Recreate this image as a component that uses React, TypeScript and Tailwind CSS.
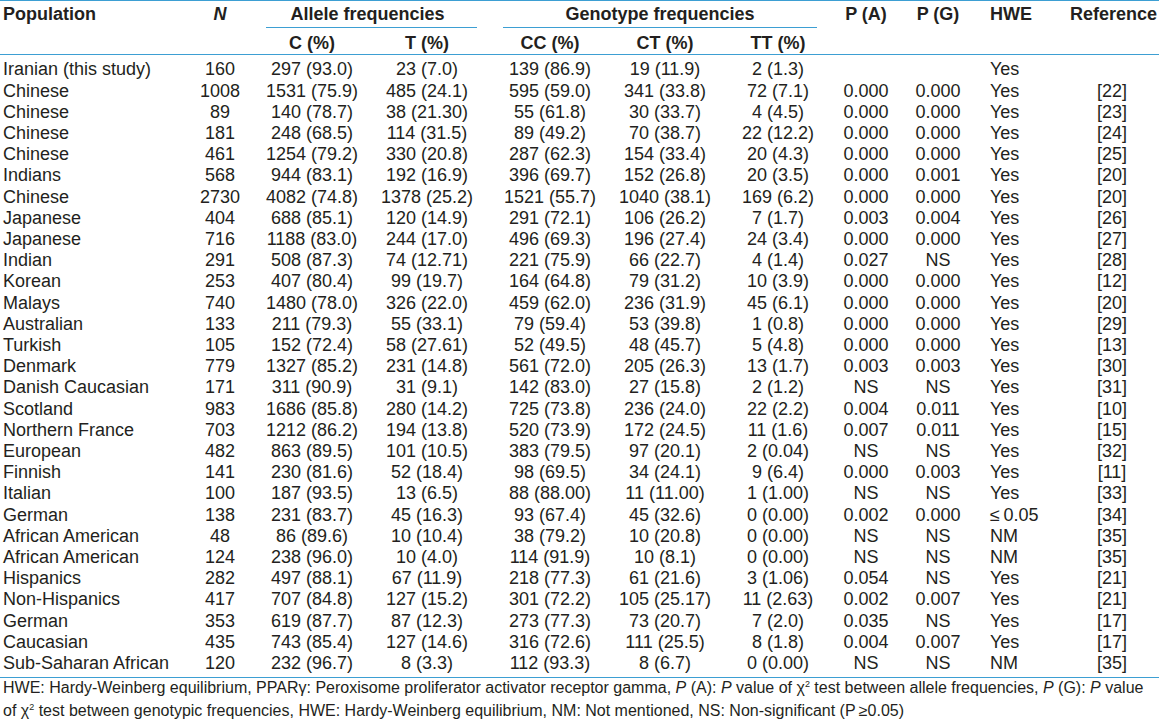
import React from "react";

const rows: string[][] = [
  ["Iranian (this study)", "160", "297 (93.0)", "23 (7.0)", "139 (86.9)", "19 (11.9)", "2 (1.3)", "", "", "Yes", ""],
  ["Chinese", "1008", "1531 (75.9)", "485 (24.1)", "595 (59.0)", "341 (33.8)", "72 (7.1)", "0.000", "0.000", "Yes", "[22]"],
  ["Chinese", "89", "140 (78.7)", "38 (21.30)", "55 (61.8)", "30 (33.7)", "4 (4.5)", "0.000", "0.000", "Yes", "[23]"],
  ["Chinese", "181", "248 (68.5)", "114 (31.5)", "89 (49.2)", "70 (38.7)", "22 (12.2)", "0.000", "0.000", "Yes", "[24]"],
  ["Chinese", "461", "1254 (79.2)", "330 (20.8)", "287 (62.3)", "154 (33.4)", "20 (4.3)", "0.000", "0.000", "Yes", "[25]"],
  ["Indians", "568", "944 (83.1)", "192 (16.9)", "396 (69.7)", "152 (26.8)", "20 (3.5)", "0.000", "0.001", "Yes", "[20]"],
  ["Chinese", "2730", "4082 (74.8)", "1378 (25.2)", "1521 (55.7)", "1040 (38.1)", "169 (6.2)", "0.000", "0.000", "Yes", "[20]"],
  ["Japanese", "404", "688 (85.1)", "120 (14.9)", "291 (72.1)", "106 (26.2)", "7 (1.7)", "0.003", "0.004", "Yes", "[26]"],
  ["Japanese", "716", "1188 (83.0)", "244 (17.0)", "496 (69.3)", "196 (27.4)", "24 (3.4)", "0.000", "0.000", "Yes", "[27]"],
  ["Indian", "291", "508 (87.3)", "74 (12.71)", "221 (75.9)", "66 (22.7)", "4 (1.4)", "0.027", "NS", "Yes", "[28]"],
  ["Korean", "253", "407 (80.4)", "99 (19.7)", "164 (64.8)", "79 (31.2)", "10 (3.9)", "0.000", "0.000", "Yes", "[12]"],
  ["Malays", "740", "1480 (78.0)", "326 (22.0)", "459 (62.0)", "236 (31.9)", "45 (6.1)", "0.000", "0.000", "Yes", "[20]"],
  ["Australian", "133", "211 (79.3)", "55 (33.1)", "79 (59.4)", "53 (39.8)", "1 (0.8)", "0.000", "0.000", "Yes", "[29]"],
  ["Turkish", "105", "152 (72.4)", "58 (27.61)", "52 (49.5)", "48 (45.7)", "5 (4.8)", "0.000", "0.000", "Yes", "[13]"],
  ["Denmark", "779", "1327 (85.2)", "231 (14.8)", "561 (72.0)", "205 (26.3)", "13 (1.7)", "0.003", "0.003", "Yes", "[30]"],
  ["Danish Caucasian", "171", "311 (90.9)", "31 (9.1)", "142 (83.0)", "27 (15.8)", "2 (1.2)", "NS", "NS", "Yes", "[31]"],
  ["Scotland", "983", "1686 (85.8)", "280 (14.2)", "725 (73.8)", "236 (24.0)", "22 (2.2)", "0.004", "0.011", "Yes", "[10]"],
  ["Northern France", "703", "1212 (86.2)", "194 (13.8)", "520 (73.9)", "172 (24.5)", "11 (1.6)", "0.007", "0.011", "Yes", "[15]"],
  ["European", "482", "863 (89.5)", "101 (10.5)", "383 (79.5)", "97 (20.1)", "2 (0.04)", "NS", "NS", "Yes", "[32]"],
  ["Finnish", "141", "230 (81.6)", "52 (18.4)", "98 (69.5)", "34 (24.1)", "9 (6.4)", "0.000", "0.003", "Yes", "[11]"],
  ["Italian", "100", "187 (93.5)", "13 (6.5)", "88 (88.00)", "11 (11.00)", "1 (1.00)", "NS", "NS", "Yes", "[33]"],
  ["German", "138", "231 (83.7)", "45 (16.3)", "93 (67.4)", "45 (32.6)", "0 (0.00)", "0.002", "0.000", "\u2264\u20090.05", "[34]"],
  ["African American", "48", "86 (89.6)", "10 (10.4)", "38 (79.2)", "10 (20.8)", "0 (0.00)", "NS", "NS", "NM", "[35]"],
  ["African American", "124", "238 (96.0)", "10 (4.0)", "114 (91.9)", "10 (8.1)", "0 (0.00)", "NS", "NS", "NM", "[35]"],
  ["Hispanics", "282", "497 (88.1)", "67 (11.9)", "218 (77.3)", "61 (21.6)", "3 (1.06)", "0.054", "NS", "Yes", "[21]"],
  ["Non-Hispanics", "417", "707 (84.8)", "127 (15.2)", "301 (72.2)", "105 (25.17)", "11 (2.63)", "0.002", "0.007", "Yes", "[21]"],
  ["German", "353", "619 (87.7)", "87 (12.3)", "273 (77.3)", "73 (20.7)", "7 (2.0)", "0.035", "NS", "Yes", "[17]"],
  ["Caucasian", "435", "743 (85.4)", "127 (14.6)", "316 (72.6)", "111 (25.5)", "8 (1.8)", "0.004", "0.007", "Yes", "[17]"],
  ["Sub-Saharan African", "120", "232 (96.7)", "8 (3.3)", "112 (93.3)", "8 (6.7)", "0 (0.00)", "NS", "NS", "NM", "[35]"],
];

const GRID =
  "grid grid-cols-[190px_60px_124px_106px_140px_90px_136px_40px_104px_78px_91px]";

function Chi() {
  return (
    <span>
      χ<span className="relative top-[-6px] text-[9px]">2</span>
    </span>
  );
}

export default function App() {
  return (
    <div className="w-[1159px] h-[721px] bg-white text-[#231f20] font-['Liberation_Sans',Arial,sans-serif] overflow-hidden">
      {/* Header */}
      <div className={`${GRID} border-t border-b border-[#3d9fd3] text-[18px] leading-[21.2px] font-bold`}>
        <div className="row-span-2 pl-[3px] pt-[3px] whitespace-nowrap">Population</div>
        <div className="row-span-2 pt-[3px] flex justify-center italic">N</div>
        <div className="col-span-2 pt-[3px]">
          <div className="ml-[16px] mr-[3px] pb-[2px] border-b border-[#3d9fd3] flex justify-center whitespace-nowrap">
            <span className="relative left-[-4px]">Allele frequencies</span>
          </div>
        </div>
        <div className="col-span-3 pt-[3px]">
          <div className="ml-[23px] mr-[29px] pb-[2px] border-b border-[#3d9fd3] flex justify-center whitespace-nowrap">
            Genotype frequencies
          </div>
        </div>
        <div className="row-span-2 pt-[3px] flex justify-center whitespace-nowrap">P (A)</div>
        <div className="row-span-2 pt-[3px] flex justify-center whitespace-nowrap">P (G)</div>
        <div className="row-span-2 pt-[3px] whitespace-nowrap">HWE</div>
        <div className="row-span-2 pt-[3px] pl-[2px] whitespace-nowrap">Reference</div>
        <div className="pt-[5px] flex justify-center whitespace-nowrap">C (%)</div>
        <div className="pt-[5px] flex justify-center whitespace-nowrap">T (%)</div>
        <div className="pt-[5px] flex justify-center whitespace-nowrap">CC (%)</div>
        <div className="pt-[5px] flex justify-center whitespace-nowrap">CT (%)</div>
        <div className="pt-[5px] flex justify-center whitespace-nowrap">TT (%)</div>
      </div>

      {/* Body */}
      <div className="pt-[4px] pb-[3px] border-b border-[#3d9fd3] text-[18px] leading-[21.2px]">
        {rows.map((r, i) => (
          <div key={i} className={GRID}>
            <div className="pl-[3px] whitespace-nowrap">{r[0]}</div>
            {r.slice(1, 9).map((c, j) => (
              <div key={j} className="flex justify-center whitespace-nowrap">
                {c}
              </div>
            ))}
            <div className="whitespace-nowrap">{r[9]}</div>
            <div className="flex justify-center pr-[3px] whitespace-nowrap">{r[10]}</div>
          </div>
        ))}
      </div>

      {/* Footnote */}
      <div className="pl-[3px] text-[16px] leading-[19.5px]">
        <div className="whitespace-nowrap">
          HWE: Hardy-Weinberg equilibrium, PPARγ: Peroxisome proliferator activator receptor gamma,{" "}
          <i>P</i> (A): <i>P</i> value of <Chi /> test between allele frequencies, <i>P</i> (G): <i>P</i> value
        </div>
        <div className="whitespace-nowrap">
          of <Chi /> test between genotypic frequencies, HWE: Hardy-Weinberg equilibrium, NM: Not mentioned, NS:
          Non-significant (P{"\u2009"}≥0.05)
        </div>
      </div>
    </div>
  );
}
